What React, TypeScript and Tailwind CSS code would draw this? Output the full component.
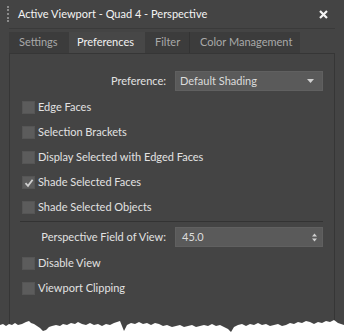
import React from 'react'

const font = { fontFamily: 'Lato, "Liberation Sans", sans-serif' }

const tear =
  '0,325 3,324 6,326 9,324 12,325 15,323 18,325 22,324 26,322 29,321 31,323 34,324 37,326 40,328 43,331 46,330 49,327 52,326 56,325 60,326 63,324 67,325 71,323 75,324 78,322 82,324 86,325 90,323 94,325 98,324 102,326 106,324 110,325 114,323 117,322 120,321 122,326 124,331 127,325 131,323 135,324 139,322 143,324 147,323 151,325 155,323 159,324 163,326 167,325 172,327 176,326 180,325 184,327 188,326 192,325 196,327 200,326 204,325 208,326 212,324 216,326 220,325 224,327 228,329 231,332 234,327 238,325 242,324 246,326 250,324 254,325 258,323 262,325 266,324 270,326 274,325 278,324 282,326 286,325 290,323 294,324 298,322 302,323 306,321 310,322 314,324 318,322 322,323 326,321 330,322 334,320 338,323 341,324 344,325 344,335 0,335'

function Check({ label, checked }: { label: string; checked?: boolean }) {
  return (
    <div className="h-[25px] flex items-center pl-[12px] gap-[3px]">
      <div className="w-[13px] h-[13px] bg-[#5c5c5c] border border-[#555555] flex items-center justify-center">
        {checked && (
          <svg width="10" height="10" viewBox="0 0 10 10">
            <path d="M1.5 5.2 L4 7.8 L8.6 1.8" fill="none" stroke="#cfcfcf" strokeWidth="1.8" />
          </svg>
        )}
      </div>
      <span className="text-[11px] text-[#e2e2e2]">{label}</span>
    </div>
  )
}

function Tab({ label, w, pl, active, sep }: { label: string; w: string; pl: string; active?: boolean; sep?: boolean }) {
  return (
    <div
      className={
        'h-full flex items-center whitespace-nowrap text-[11px] ' + w + ' ' + pl + ' ' +
        (active ? 'bg-[#474747] text-[#f2f2f2]' : 'bg-[#3c3c3c] text-[#a9a9a9]') +
        (sep ? ' border-l border-[#333333]' : '')
      }
    >
      {label}
    </div>
  )
}

export default function App() {
  return (
    <div className="w-[344px] h-[335px] bg-[#444444] relative overflow-hidden flex flex-col" style={font}>
      {/* Title bar */}
      <div className="h-[28px] flex items-center shrink-0">
        <div className="ml-[7px] w-[2px] h-[16px] border-l-2 border-dotted border-[#8a8a8a]" />
        <span className="ml-[9px] text-[11px] text-[#f4f4f4]">Active Viewport - Quad 4 - Perspective</span>
        <svg className="ml-auto mr-[16px]" width="9" height="9" viewBox="0 0 9 9">
          <path d="M1 1 L8 8 M8 1 L1 8" stroke="#f4f4f4" strokeWidth="2.2" />
        </svg>
      </div>
      <div className="h-px mx-[9px] bg-[#3a3a3a] shrink-0" />

      {/* Tabs */}
      <div className="mt-[3px] h-[21px] flex ml-[9px] shrink-0">
        <Tab label="Settings" w="w-[60px]" pl="pl-[10px]" />
        <Tab label="Preferences" w="w-[76px]" pl="pl-[8px]" active />
        <Tab label="Filter" w="w-[44px]" pl="pl-[10px]" />
        <Tab label="Color Management" w="w-[111px]" pl="pl-[10px]" sep />
      </div>

      {/* Panel */}
      <div className="flex-1 mx-[9px] border border-b-0 border-[#363636] flex flex-col pt-[17px]">
        <div className="flex items-center h-[20px]">
          <span className="w-[156px] text-right text-[11px] text-[#e2e2e2]">Preference:</span>
          <div className="ml-[9px] w-[148px] h-[20px] bg-[#5a5a5a] border border-[#606060] flex items-center pl-[4px] pr-[8px]">
            <span className="text-[11px] text-[#dcdcdc]">Default Shading</span>
            <svg className="ml-auto" width="7" height="5" viewBox="0 0 7 5">
              <path d="M0 0 L7 0 L3.5 4 Z" fill="#d0d0d0" />
            </svg>
          </div>
        </div>
        <div className="mt-[4px]">
          <Check label="Edge Faces" />
          <Check label="Selection Brackets" />
          <Check label="Display Selected with Edged Faces" />
          <Check label="Shade Selected Faces" checked />
          <Check label="Shade Selected Objects" />
        </div>
        <div className="mt-[1px] ml-[10px] w-[303px] h-px bg-[#333333]" />
        <div className="mt-[5px] flex items-center h-[20px]">
          <span className="w-[156px] text-right text-[11px] text-[#e2e2e2]">Perspective Field of View:</span>
          <div className="ml-[9px] w-[148px] h-[20px] bg-[#5a5a5a] border border-[#606060] flex items-center pl-[6px] pr-[5px]">
            <span className="text-[11px] text-[#dcdcdc]">45.0</span>
            <svg className="ml-auto" width="5" height="9" viewBox="0 0 5 9">
              <path d="M0 3.5 L2.5 0.5 L5 3.5 Z M0 5.5 L2.5 8.5 L5 5.5 Z" fill="#d0d0d0" />
            </svg>
          </div>
        </div>
        <div className="mt-[4px]">
          <Check label="Disable View" />
          <Check label="Viewport Clipping" />
        </div>
      </div>

      <svg className="absolute left-0 bottom-0" width="344" height="335" viewBox="0 0 344 335">
        <polygon points={tear} fill="#ffffff" />
      </svg>
    </div>
  )
}
